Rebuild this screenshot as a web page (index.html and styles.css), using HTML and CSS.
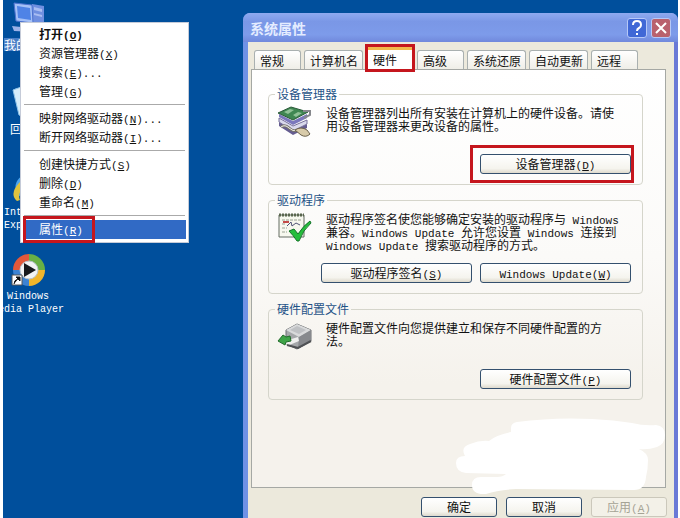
FILE: index.html
```html
<!DOCTYPE html>
<html lang="zh-CN">
<head>
    <meta charset="UTF-8">
    <meta name="viewport" content="width=device-width, initial-scale=1.0">
    <title>系统属性</title>
    <link rel="stylesheet" href="styles.css">
</head>
<body>

<main class="desktop">
    <!-- Desktop icons -->
    <div class="shortcuts">
        <div class="shortcut selected">
            <svg viewBox="0 0 36 32" width="36" height="32">
                <path d="M22 2l12 2v20l-9 5-3-2z" fill="#6f8fe0"/>
                <path d="M24 5l8 2v3l-8-2zM24 11l8 2v2l-8-2z" fill="#a9bdf2"/>
                <path d="M4 1l18 2 1 18-17-2z" fill="#a5c0f6" stroke="#4c72cf"/>
                <path d="M7 4l13 2 1 12-13-2z" fill="#4f83e6"/>
                <path d="M2 24l18 2 4 4-20-1z" fill="#9cb2e8"/>
            </svg>
            <span>我的电脑</span>
        </div>
        <div class="shortcut">
            <svg viewBox="0 0 36 32" width="36" height="32">
                <path d="M3 4q14-7 30 0l-5 25q-10 5-19 0z" fill="#d6ecfa" stroke="#8fc4ea"/>
                <path d="M13 14l5-5 5 5M12 18l3 6h6l3-6" fill="none" stroke="#3c9a50" stroke-width="2"/>
            </svg>
            <span>回收站</span>
        </div>
        <div class="shortcut">
            <svg viewBox="0 0 36 32" width="36" height="32">
                <circle cx="18" cy="17" r="10" fill="none" stroke="#4ba4ee" stroke-width="5"/>
                <path d="M10 17h17" stroke="#4ba4ee" stroke-width="4"/>
                <path d="M7 31q-8-7 2-18Q20 1 31 5q-10 2-17 11-7 8-4 14z" fill="#dfc33e"/>
            </svg>
            <span class="latin">Internet<br>Explorer</span>
        </div>
        <div class="shortcut">
            <svg viewBox="0 0 36 32" width="36" height="32">
                <path d="M19 16V0A16 16 0 0 0 3 16z" fill="#e2583a"/>
                <path d="M19 16V0A16 16 0 0 1 35 16z" fill="#68b044"/>
                <path d="M19 16H35A16 16 0 0 1 19 32z" fill="#f0b52b"/>
                <path d="M19 16V32A16 16 0 0 1 3 16z" fill="#3d83d2"/>
                <circle cx="19" cy="16" r="9" fill="#f1f3f4" stroke="#b9c4cd"/>
                <path d="M14 9l12 7-12 7z" fill="#17191d"/>
                <path d="M2 21h10v10H2z" fill="#fff" stroke="#555"/>
                <path d="M4 30q0-4 4-5M6 23h4v4z" fill="#111" stroke="#111"/>
            </svg>
            <span class="latin">Windows<br>Media Player</span>
        </div>
    </div>

    <!-- Context menu of My Computer -->
    <div class="menu" role="menu">
        <button class="menu-item default" role="menuitem">打开<span class="latin">(<u>O</u>)</span></button>
        <button class="menu-item" role="menuitem">资源管理器<span class="latin">(<u>X</u>)</span></button>
        <button class="menu-item" role="menuitem">搜索<span class="latin">(<u>E</u>)...</span></button>
        <button class="menu-item" role="menuitem">管理<span class="latin">(<u>G</u>)</span></button>
        <hr>
        <button class="menu-item" role="menuitem">映射网络驱动器<span class="latin">(<u>N</u>)...</span></button>
        <button class="menu-item" role="menuitem">断开网络驱动器<span class="latin">(<u>I</u>)...</span></button>
        <hr>
        <button class="menu-item" role="menuitem">创建快捷方式<span class="latin">(<u>S</u>)</span></button>
        <button class="menu-item" role="menuitem">删除<span class="latin">(<u>D</u>)</span></button>
        <button class="menu-item" role="menuitem">重命名<span class="latin">(<u>M</u>)</span></button>
        <hr>
        <button class="menu-item active" role="menuitem"><span class="marked">属性<span class="latin">(<u>R</u>)</span></span></button>
    </div>

    <!-- System properties -->
    <section class="window">
        <header class="titlebar">
            <h1>系统属性</h1>
            <button class="title-button help" aria-label="帮助">
                <svg viewBox="0 0 20 20" width="20" height="20">
                    <path d="M6 7q0-4 4-4t4 4q0 2-2 3-2 1-2 3" fill="none" stroke="#fff" stroke-width="2"/>
                    <path d="M9 15h2v2H9z" fill="#fff"/>
                </svg>
            </button>
            <button class="title-button close" aria-label="关闭">
                <svg viewBox="0 0 20 20" width="20" height="20">
                    <path d="M5 5l10 10M15 5L5 15" stroke="#fff" stroke-width="2"/>
                </svg>
            </button>
        </header>

        <div class="tabs" role="tablist">
            <button class="tab" role="tab">常规</button>
            <button class="tab wide" role="tab">计算机名</button>
            <button class="tab current marked" role="tab" aria-selected="true">硬件</button>
            <button class="tab" role="tab">高级</button>
            <button class="tab wide" role="tab">系统还原</button>
            <button class="tab wide" role="tab">自动更新</button>
            <button class="tab" role="tab">远程</button>
        </div>

        <div class="panel">
            <fieldset>
                <legend>设备管理器</legend>
                <div class="info">
                    <svg viewBox="0 0 36 32" width="36" height="32">
                        <path d="M2 16l14 8 14-6v4l-14 7-14-9z" fill="#655d91"/>
                        <path d="M2 12l14 8 14-6v4l-14 7-14-9z" fill="#d9d9ec" stroke="#77709c"/>
                        <path d="M2 8l14 7 14-7v4l-14 7-14-8z" fill="#7b78bd"/>
                        <path d="M1 7L14 1l17 5-15 8z" fill="#3f8752" stroke="#2b5a39"/>
                        <path d="M7 6l6-3 4 1-6 4zM16 9l5-3 4 1-6 4z" fill="#91c297"/>
                        <path d="M26 5h7v4l-6 3" fill="none" stroke="#86888c" stroke-width="2"/>
                        <path d="M4 21q4-3 8 1t8 2" fill="none" stroke="#77746c" stroke-width="3"/>
                        <path d="M4 21q4-3 8 1t8 2" fill="none" stroke="#f0efe9"/>
                        <path d="M18 24q6-4 12 0l3 4q-4 4-9 1z" fill="#d8cbaa" stroke="#6b614b"/>
                    </svg>
                    <p>设备管理器列出所有安装在计算机上的硬件设备。请使<br>用设备管理器来更改设备的属性。</p>
                </div>
                <div class="actions">
                    <button class="button marked">设备管理器<span class="latin">(<u>D</u>)</span></button>
                </div>
            </fieldset>

            <fieldset>
                <legend>驱动程序</legend>
                <div class="info tall">
                    <svg viewBox="0 0 36 32" width="36" height="32">
                        <path d="M2 3h25v22H2z" fill="#f7f8ef" stroke="#656d62"/>
                        <path d="M2 3h25" stroke="#59664e" stroke-width="3" stroke-dasharray="2 1"/>
                        <path d="M5 8h19M5 12h4M5 16h5M5 20h5" stroke="#9aa293" stroke-dasharray="3 1"/>
                        <path d="M6 10h6" stroke="#c44a48" stroke-width="2"/>
                        <path d="M10 14l4-4 1 4 4-3 4 2" fill="none" stroke="#4f5275"/>
                        <path d="M12 19l5-2 4 5q6-9 12-13l1 2q-8 7-12 18h-2q-4-6-8-10z" fill="#25be3c" stroke="#16752a"/>
                    </svg>
                    <p>驱动程序签名使您能够确定安装的驱动程序与<span class="latin"> Windows</span><br>兼容。<span class="latin">Windows Update </span>允许您设置<span class="latin"> Windows </span>连接到<br><span class="latin">Windows Update </span>搜索驱动程序的方式。</p>
                </div>
                <div class="actions">
                    <button class="button">驱动程序签名<span class="latin">(<u>S</u>)</span></button>
                    <button class="button"><span class="latin">Windows Update(<u>W</u>)</span></button>
                </div>
            </fieldset>

            <fieldset>
                <legend>硬件配置文件</legend>
                <div class="info">
                    <svg viewBox="0 0 36 32" width="36" height="32">
                        <path d="M9 9l11-6 14 6v11l-14 8-11-5z" fill="#a5a7aa" stroke="#6d6f72"/>
                        <path d="M9 9l11-6 14 6-12 7z" fill="#d9dadb"/>
                        <path d="M13 9l7-4 9 4-7 4z" fill="#bfc1c4"/>
                        <path d="M22 16l12-7v11l-13 8z" fill="#87898d"/>
                        <path d="M8 20l13-4 1 4-12 5z" fill="#f0f0ef"/>
                        <path d="M10 24l11 3 13-7" fill="none" stroke="#4f5154" stroke-width="2"/>
                        <path d="M1 20l5-6 3 2 4-1 1 5-5 1-1 3z" fill="#3ea347" stroke="#226b2b"/>
                    </svg>
                    <p>硬件配置文件向您提供建立和保存不同硬件配置的方<br>法。</p>
                </div>
                <div class="actions">
                    <button class="button">硬件配置文件<span class="latin">(<u>P</u>)</span></button>
                </div>
            </fieldset>
        </div>

        <footer class="dialog-buttons">
            <button class="button">确定</button>
            <button class="button">取消</button>
            <button class="button" disabled>应用<span class="latin">(<u>A</u>)</span></button>
        </footer>

        <svg class="brush" viewBox="0 0 210 77" width="210" height="77">
            <path d="M55 10Q55 5 61 4Q98 -1 136 1Q158 2 176 5Q188 8 200 7Q209 8 209 17Q209 26 201 29Q192 32 183 31Q192 35 192 42Q192 51 190 59Q189 72 178 72L60 71Q42 72 30 76Q16 77 16 67Q16 59 25 59L41 59Q47 59 50 56L10 55Q0 54 0 45Q0 38 9 38Q4 29 14 26Q24 22 33 23Q40 17 55 14Z" fill="#fff"/>
        </svg>
    </section>
</main>

</body>
</html>
```

FILE: styles.css
```css
* {
    box-sizing: border-box;
}
body {
    margin: 0;
    background-color: #fff;
    font-family: "Noto Sans CJK SC", "Liberation Sans", sans-serif;
    font-size: 12px;
    color: #111;
}
button {
    font: inherit;
    color: inherit;
    white-space: nowrap;
}
.latin {
    font-family: "Liberation Mono", "Noto Sans CJK SC", monospace;
    font-size: 11px;
}
.desktop {
    position: relative;
    height: 100vh;
    margin: 0 2px 0 3px;
    overflow: hidden;
    background-color: #004f9c;
}

/* Desktop icons */
.shortcuts {
    width: 50px;
    padding-top: 2px;
}
.shortcut {
    display: flex;
    flex-direction: column;
    align-items: center;
    gap: 4px;
    height: 84px;
    line-height: 13px;
    text-align: center;
    white-space: nowrap;
    color: #fff;
}
.shortcut svg {
    flex: none;
}
.shortcut .latin {
    font-size: 10px;
}
.shortcut.selected span {
    background-color: #4a7fc6;
}

/* Context menu */
.menu {
    position: absolute;
    top: 22px;
    left: 17px;
    width: 169px;
    padding: 2px 2px 3px;
    border: 1px solid #c5cbd8;
    background-color: #fff;
}
.menu-item {
    display: block;
    width: 100%;
    height: 19px;
    padding: 0 0 0 16px;
    border: none;
    background: none;
    line-height: 18px;
    text-align: left;
}
.menu-item.default {
    font-weight: bold;
}
.menu-item.active {
    background-color: #316ac5;
    color: #fff;
}
.menu hr {
    height: 1px;
    margin: 3px 1px 4px;
    border: none;
    background-color: #aaa;
}

/* Red frames */
.marked {
    position: relative;
}
.marked::after {
    content: "";
    position: absolute;
    inset: -4px;
    border: 3px solid #c5161d;
}
.menu .marked::after {
    inset: -4px -12px -6px -16px;
}
.actions .marked::after {
    inset: -10px -4px -10px -11px;
}

/* Window */
.window {
    position: absolute;
    top: 13px;
    left: 240px;
    right: 0;
    border: solid #6a79d6;
    border-width: 0 4px 0 5px;
    border-left-color: #6f92e6;
    border-radius: 7px 7px 0 0;
    background-color: #ece9dc;
}
.titlebar {
    display: flex;
    align-items: center;
    gap: 4px;
    height: 29px;
    margin: 0 -4px 0 -5px;
    padding: 0 7px;
    border-radius: 7px 7px 0 0;
    background: linear-gradient(#8eaaf0, #7a97e6 30%, #7d9bea 75%, #7189dc);
    color: #e4ecff;
}
.titlebar h1 {
    flex: 1;
    margin: 0;
    font-size: 14px;
    line-height: 20px;
}
.title-button {
    width: 20px;
    height: 20px;
    padding: 0;
    border: 1px solid #b6c8f7;
    border-radius: 3px;
    background-color: #4068d6;
}
.title-button svg {
    display: block;
    margin: -1px;
}
.title-button.close {
    background-color: #b9616d;
}
.tabs {
    display: flex;
    align-items: flex-end;
    gap: 3px;
    margin: 5px 8px 0 6px;
}
.tab {
    width: 47px;
    height: 19px;
    padding: 0 5px;
    border: 1px solid #a9b0b0;
    border-bottom: none;
    border-radius: 3px 3px 0 0;
    background: linear-gradient(#fff, #efeee7);
    line-height: 17px;
    text-align: left;
}
.tab.wide {
    width: 59px;
}
.tab.current {
    z-index: 1;
    width: 48px;
    height: 22px;
    padding: 0 6px;
    border-top: 3px solid #f2b84b;
    background: #fff;
}
.tab.current::after {
    inset: -6px -2px -3px;
}

/* Hardware page */
.panel {
    display: flex;
    flex-direction: column;
    gap: 7px;
    margin: 0 8px 0 3px;
    padding: 16px 22px 87px 16px;
    border: 1px solid #a5a8a4;
    background: linear-gradient(#fff, #fbfaf8 45%, #f5f2ec 75%);
}
fieldset {
    min-width: 0;
    margin: 0;
    padding: 4px 11px 10px 8px;
    border: 1px solid #d5d5cb;
    border-radius: 4px;
}
legend {
    padding: 0 2px;
    margin-left: -2px;
    line-height: 16px;
    color: #1f5387;
}
.info {
    display: flex;
    gap: 13px;
    min-height: 39px;
}
.info.tall {
    min-height: 42px;
}
.info svg {
    flex: none;
}
.info p {
    margin: 0;
    line-height: 13px;
    white-space: nowrap;
}
.info .latin,
.button .latin {
    line-height: 1px;
}
.actions {
    display: flex;
    justify-content: flex-end;
    gap: 8px;
    margin-top: 9px;
}
.button {
    width: 76px;
    height: 20px;
    padding: 0;
    border: 1px solid #34506e;
    border-radius: 3px;
    background: linear-gradient(#fff, #f5f4ee 75%, #dedacd);
    line-height: 16px;
}
.actions .button {
    width: 151px;
}
.button:disabled {
    border-color: #cbc8bb;
    background: #f3f1e8;
    color: #a5a395;
}
.dialog-buttons {
    display: flex;
    justify-content: flex-end;
    gap: 9px;
    padding: 9px 7px;
}

/* White brush strokes over the lower corner */
.brush {
    position: absolute;
    top: 405px;
    right: 8px;
}
```
